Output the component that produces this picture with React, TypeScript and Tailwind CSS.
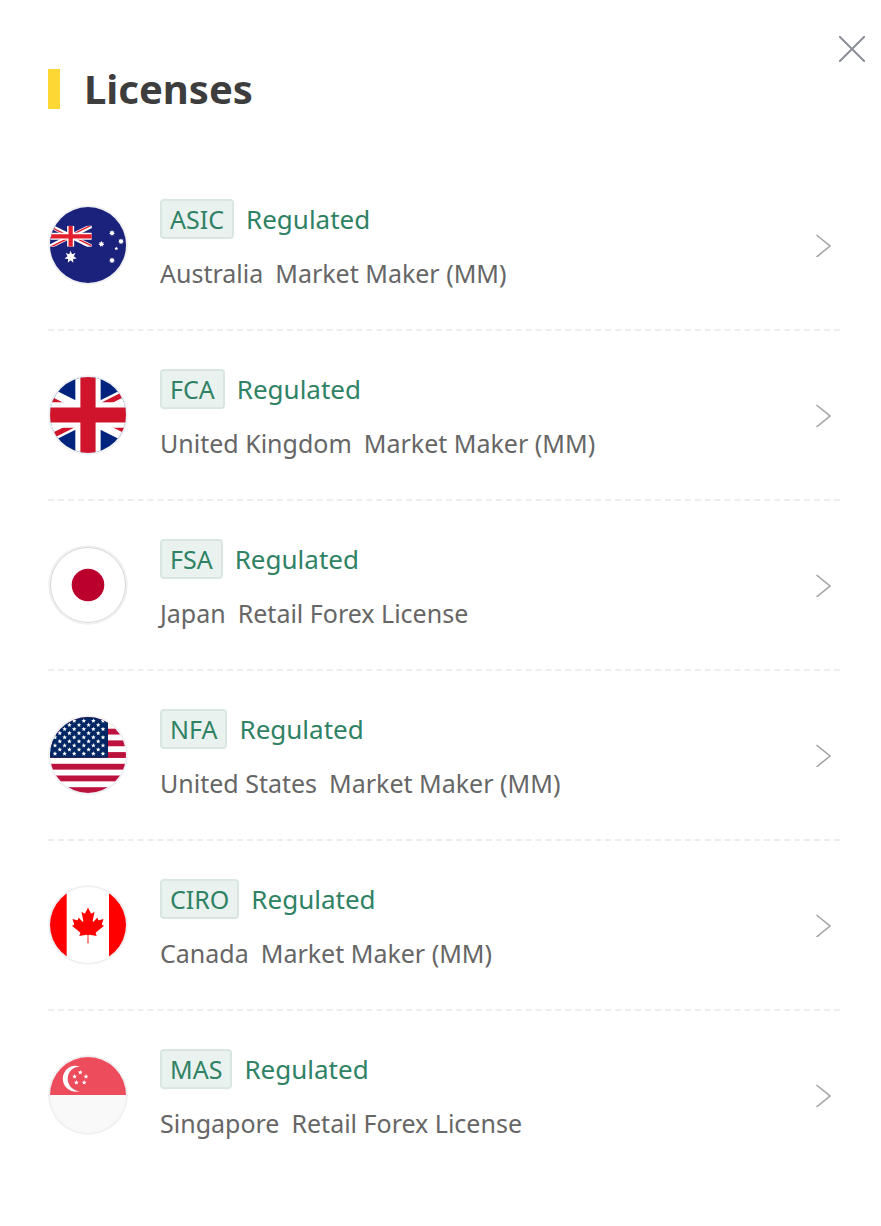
import { useState, type ReactNode } from "react";

type Country = "au" | "gb" | "jp" | "us" | "ca" | "sg";

interface License {
    code: string;
    status: string;
    country: string;
    kind: string;
    flag: Country;
}

const licenses: License[] = [
    { code: "ASIC", status: "Regulated", country: "Australia", kind: "Market Maker (MM)", flag: "au" },
    { code: "FCA", status: "Regulated", country: "United Kingdom", kind: "Market Maker (MM)", flag: "gb" },
    { code: "FSA", status: "Regulated", country: "Japan", kind: "Retail Forex License", flag: "jp" },
    { code: "NFA", status: "Regulated", country: "United States", kind: "Market Maker (MM)", flag: "us" },
    { code: "CIRO", status: "Regulated", country: "Canada", kind: "Market Maker (MM)", flag: "ca" },
    { code: "MAS", status: "Regulated", country: "Singapore", kind: "Retail Forex License", flag: "sg" },
];

function starPoints(cx: number, cy: number, r: number, tips = 5, inner = 0.45) {
    const points: string[] = [];
    for (let i = 0; i < tips * 2; i++) {
        const radius = i % 2 === 0 ? r : r * inner;
        const angle = (Math.PI * i) / tips - Math.PI / 2;
        points.push(`${(cx + radius * Math.cos(angle)).toFixed(2)},${(cy + radius * Math.sin(angle)).toFixed(2)}`);
    }
    return points.join(" ");
}

// drawn on a 60x30 grid, id keeps the clip paths apart
function UnionJack({ id, blue, red }: { id: string; blue: string; red: string }) {
    return (
        <g>
            <clipPath id={`${id}-box`}>
                <path d="M0 0h60v30H0z" />
            </clipPath>
            <clipPath id={`${id}-diag`}>
                <path d="M30 15h30v15zv15H0zH0V0zV0h30z" />
            </clipPath>
            <g clipPath={`url(#${id}-box)`}>
                <path d="M0 0h60v30H0z" fill={blue} />
                <path d="M0 0l60 30M60 0L0 30" stroke="#fff" strokeWidth="6" />
                <path d="M0 0l60 30M60 0L0 30" stroke={red} strokeWidth="4" clipPath={`url(#${id}-diag)`} />
                <path d="M30 0v30M0 15h60" stroke="#fff" strokeWidth="10" />
                <path d="M30 0v30M0 15h60" stroke={red} strokeWidth="6" />
            </g>
        </g>
    );
}

const usStars: [number, number][] = [];
for (let row = 0; row < 9; row++) {
    const odd = row % 2 === 1;
    for (let col = 0; col < (odd ? 5 : 6); col++) {
        usStars.push([7 + col * 9.6 + (odd ? 4.8 : 0), 5.9 + row * 4.1]);
    }
}

const flags: Record<Country, ReactNode> = {
    au: (
        <>
            <path d="M0 0h80v80H0z" fill="#1b227c" />
            <g transform="translate(1.5 20.7) scale(.705)">
                <UnionJack id="au" blue="#1b227c" red="#e41f2d" />
            </g>
            <g fill="#fff">
                <polygon points={starPoints(22.6, 52, 6.3, 7, 0.5)} />
                <polygon points={starPoints(64, 28, 3, 7, 0.6)} />
                <polygon points={starPoints(53.4, 39, 3, 7, 0.6)} />
                <polygon points={starPoints(73, 36.4, 3, 7, 0.6)} />
                <polygon points={starPoints(68.3, 43.6, 2)} />
                <polygon points={starPoints(64, 55.4, 3, 7, 0.6)} />
            </g>
        </>
    ),
    gb: (
        <g transform="translate(-36 2) scale(2.533)">
            <UnionJack id="gb" blue="#00247d" red="#cf142b" />
        </g>
    ),
    jp: (
        <>
            <circle cx="40" cy="40" r="37.5" fill="#fff" stroke="#d4d4d4" />
            <circle cx="40" cy="40" r="16.3" fill="#bc002d" />
        </>
    ),
    us: (
        <>
            <path d="M0 0h80v80H0z" fill="#fff" />
            {[0, 2, 4, 6, 8, 10, 12].map((i) => (
                <rect key={i} x="0" y={2 + i * 5.85} width="80" height="5.85" fill="#bb133e" />
            ))}
            <path d="M0 0h60v42.8H0z" fill="#002664" />
            {usStars.map(([x, y]) => (
                <polygon key={`${x}-${y}`} points={starPoints(x, y, 2.4)} fill="#fff" />
            ))}
        </>
    ),
    ca: (
        <>
            <path d="M0 0h80v80H0z" fill="#fff" />
            <path d="M0 0h18.7v80H0zM61 0h19v80H61z" fill="#f00" />
            <path
                transform="translate(40 40.2) scale(.0086 .0089)"
                fill="#f00"
                d="m-60 2030 15-863a95 95 0 0 0-111-98l-859 151 116-320a65 65 0 0 0-20-73l-941-762 212-99a65 65 0 0 0 34-79l-186-572 542 115a65 65 0 0 0 73-38l105-247 423 454a65 65 0 0 0 111-57l-204-1052 327 189a65 65 0 0 0 91-27l332-652 332 652a65 65 0 0 0 91 27l327-189-204 1052a65 65 0 0 0 111 57l423-454 105 247a65 65 0 0 0 73 38l542-115-186 572a65 65 0 0 0 34 79l212 99-941 762a65 65 0 0 0-20 73l116 320-859-151a95 95 0 0 0-111 98l15 863z"
            />
        </>
    ),
    sg: (
        <>
            <path d="M0 0h80v80H0z" fill="#f9f9f9" />
            <path d="M0 0h80v40H0z" fill="#ed4c5c" />
            <path d="M32 11.4a13 13 0 1 0 0 24.6a12.3 12.3 0 0 1 0-24.6z" fill="#fff" />
            <g fill="#fff">
                <polygon points={starPoints(32.3, 17.4, 2.5)} />
                <polygon points={starPoints(26.6, 21.6, 2.5)} />
                <polygon points={starPoints(38, 21.6, 2.5)} />
                <polygon points={starPoints(28.4, 27.6, 2.5)} />
                <polygon points={starPoints(36.2, 27.6, 2.5)} />
            </g>
        </>
    ),
};

function Flag({ country }: { country: Country }) {
    return (
        <svg viewBox="0 0 80 80" className="size-20 shrink-0" aria-hidden="true">
            <clipPath id={`round-${country}`}>
                <circle cx="40" cy="40" r="38" />
            </clipPath>
            <circle cx="40" cy="40" r="39.8" fill="#f0f0f2" />
            <g clipPath={`url(#round-${country})`}>{flags[country]}</g>
        </svg>
    );
}

function LicenseRow({ license }: { license: License }) {
    return (
        <li className="border-b-2 border-dashed border-[#ededed] last:border-transparent">
            <a href={`#${license.code}`} className="flex items-center gap-8 py-[38px] pr-2">
                <Flag country={license.flag} />
                <div className="min-w-0 flex-1">
                    <div className="flex items-center gap-3 text-[#2f8264]">
                        <span className="h-10 rounded-sm border-2 border-[#dae6e2] bg-[#eaf2ef] px-2 text-[25px] leading-9">
                            {license.code}
                        </span>
                        <span className="text-[26px] leading-10">{license.status}</span>
                    </div>
                    <div className="mt-4 flex gap-3 text-[25px] leading-9 text-[#666]">
                        <span>{license.country}</span>
                        <span>{license.kind}</span>
                    </div>
                </div>
                <svg viewBox="0 0 16 24" className="h-6 w-4 shrink-0" fill="none" stroke="#a3a3a3" strokeWidth="1.6" aria-hidden="true">
                    <path d="M0.5 2L14 13L0.5 24" />
                </svg>
            </a>
        </li>
    );
}

function App() {
    const [open, setOpen] = useState(true);

    if (!open) {
        return null;
    }

    return (
        <section className="min-h-svh bg-white pb-10 font-['Noto_Sans',sans-serif]">
            <header className="flex items-start justify-between pt-9 pr-4 pb-[52px] pl-12">
                <div className="mt-[33px] flex items-center gap-6">
                    <span className="h-10 w-3 bg-[#fdd835]" />
                    <h1 className="text-[40px] leading-10 font-bold text-[#3d3d3d]">Licenses</h1>
                </div>
                <button type="button" aria-label="Close" onClick={() => setOpen(false)}>
                    <svg viewBox="0 0 26 26" className="size-[26px]" stroke="#8b8f96" strokeWidth="2">
                        <path d="M0 0l26 26M26 0L0 26" />
                    </svg>
                </button>
            </header>
            <ul className="mr-[41px] ml-12">
                {licenses.map((license) => (
                    <LicenseRow key={license.code} license={license} />
                ))}
            </ul>
        </section>
    );
}

export default App;
